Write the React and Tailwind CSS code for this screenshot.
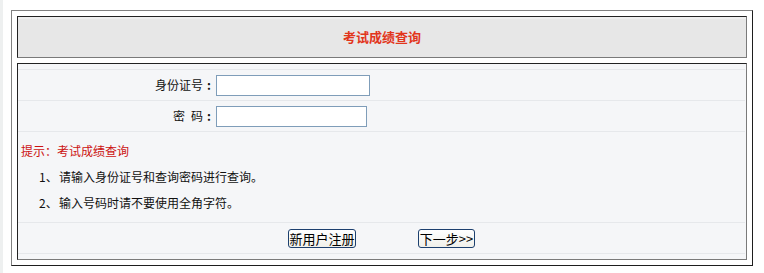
const Row = ({ children, className = '' }) => (
  <div className={`border-t border-[#e6e8eb] ${className}`}>{children}</div>
);

const Colon = () => <span className="inline-block w-[12px] text-center font-bold">:</span>;

const App = () => {
  return (
    <div className="flex min-h-[273px] bg-white font-['SimSun','Noto_Sans_CJK_SC',sans-serif] text-[12px] text-[#111]">
      <div className="w-[3px] bg-[#eef0f0]" />
      <div className="pl-[8px] pt-[10px]">
        {/* outer table */}
        <div className="flex h-[256px] w-[742px] flex-col gap-[5px] border border-t-[#808080] border-l-[#808080] border-r-[#1e1e1e] border-b-[#1e1e1e] p-[5px]">
          {/* title cell */}
          <div className="flex h-[42px] items-center justify-center border border-t-[#222] border-l-[#222] border-r-[#7a7a7a] border-b-[#7a7a7a] bg-[#e7e7e7] shadow-[inset_0_2px_0_#eeeeee]">
            <span className="text-[13px] font-bold text-[#e2361c]">考试成绩查询</span>
          </div>

          {/* form cell */}
          <div className="flex-1 border border-t-[#222] border-l-[#222] border-r-[#7a7a7a] border-b-[#7a7a7a] bg-[#f5f6f8] pb-[5px] pt-[5px] pr-[1px]">
            <div className="border-b border-[#e6e8eb]">
              <Row className="flex h-[31px] items-center">
                <div className="w-[197px] text-right">
                  身份证号<Colon />
                </div>
                <input className="ml-[1px] h-[21px] w-[154px] border border-[#7f9db9] bg-white px-1 outline-none" />
              </Row>
              <Row className="flex h-[31px] items-center">
                <div className="w-[197px] text-right">
                  密<span className="inline-block w-[6px]" />码<Colon />
                </div>
                <input type="password" className="ml-[1px] h-[21px] w-[151px] border border-[#7f9db9] bg-white px-1 outline-none" />
              </Row>
              <Row className="h-[91px] pt-[6px] leading-[26px]">
                <div className="pl-[3px] text-[#cc1111]">提示：考试成绩查询</div>
                <div className="flex pl-[21px]">
                  <span className="w-[20px]">1、</span>
                  <span>请输入身份证号和查询密码进行查询。</span>
                </div>
                <div className="flex pl-[21px]">
                  <span className="w-[20px]">2、</span>
                  <span>输入号码时请不要使用全角字符。</span>
                </div>
              </Row>
              <Row className="flex h-[31px] items-center justify-center gap-[62px]">
                <button className="h-[19px] w-[68px] rounded-[3px] border border-[#1c3f6e] bg-gradient-to-b from-white to-[#f0f0ea] px-0 text-[13px] leading-[17px] text-black">
                  新用户注册
                </button>
                <button className="h-[19px] w-[57px] rounded-[3px] border border-[#1c3f6e] bg-gradient-to-b from-white to-[#f0f0ea] px-0 text-[13px] leading-[17px] text-black">
                  下一步&gt;&gt;
                </button>
              </Row>
            </div>
          </div>
        </div>
      </div>
    </div>
  );
};

export default App;
